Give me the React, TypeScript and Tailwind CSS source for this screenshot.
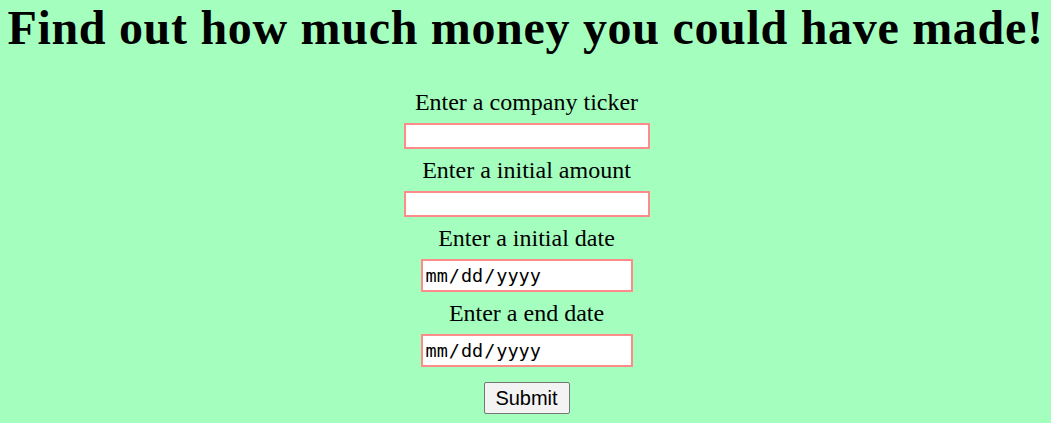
import React from "react";

const dateCls =
  "mt-[9px] w-[212px] h-[33px] bg-white border-2 border-[#ff8a8a] outline-none pl-[2px] pr-0 text-[18.5px] [font-family:'DejaVu_Sans_Mono',monospace] [&::-webkit-calendar-picker-indicator]:hidden";
const textCls = "mt-[9px] w-[246px] h-[26px] bg-white border-2 border-[#ff8a8a] outline-none";

export default function App() {
  return (
    <div className="min-h-[423px] w-full bg-[#a4ffbf] text-black flex flex-col items-center">
      <h1 className="text-[48px] leading-[56px] font-bold whitespace-nowrap tracking-[0.7px] [font-family:'Liberation_Serif',serif]">
        Find out how much money you could have made!
      </h1>
      <form className="flex flex-col items-center mt-[34px] pl-[2px] [font-family:'Liberation_Serif',serif] text-[24px]">
        <label className="leading-[24px]">Enter a company ticker</label>
        <input type="text" className={textCls} />
        <label className="leading-[24px] mt-[9px]">Enter a initial amount</label>
        <input type="text" className={textCls} />
        <label className="leading-[24px] mt-[9px]">Enter a initial date</label>
        <input type="date" className={dateCls} />
        <label className="leading-[24px] mt-[9px]">Enter a end date</label>
        <input type="date" className={dateCls} />
        <button
          type="button"
          className="mt-[15px] w-[86px] h-[32px] bg-[#f3f3f3] border border-[#767676] rounded-[2px] text-[20px] [font-family:'Liberation_Sans',Arial,sans-serif] leading-none"
        >
          Submit
        </button>
      </form>
    </div>
  );
}
